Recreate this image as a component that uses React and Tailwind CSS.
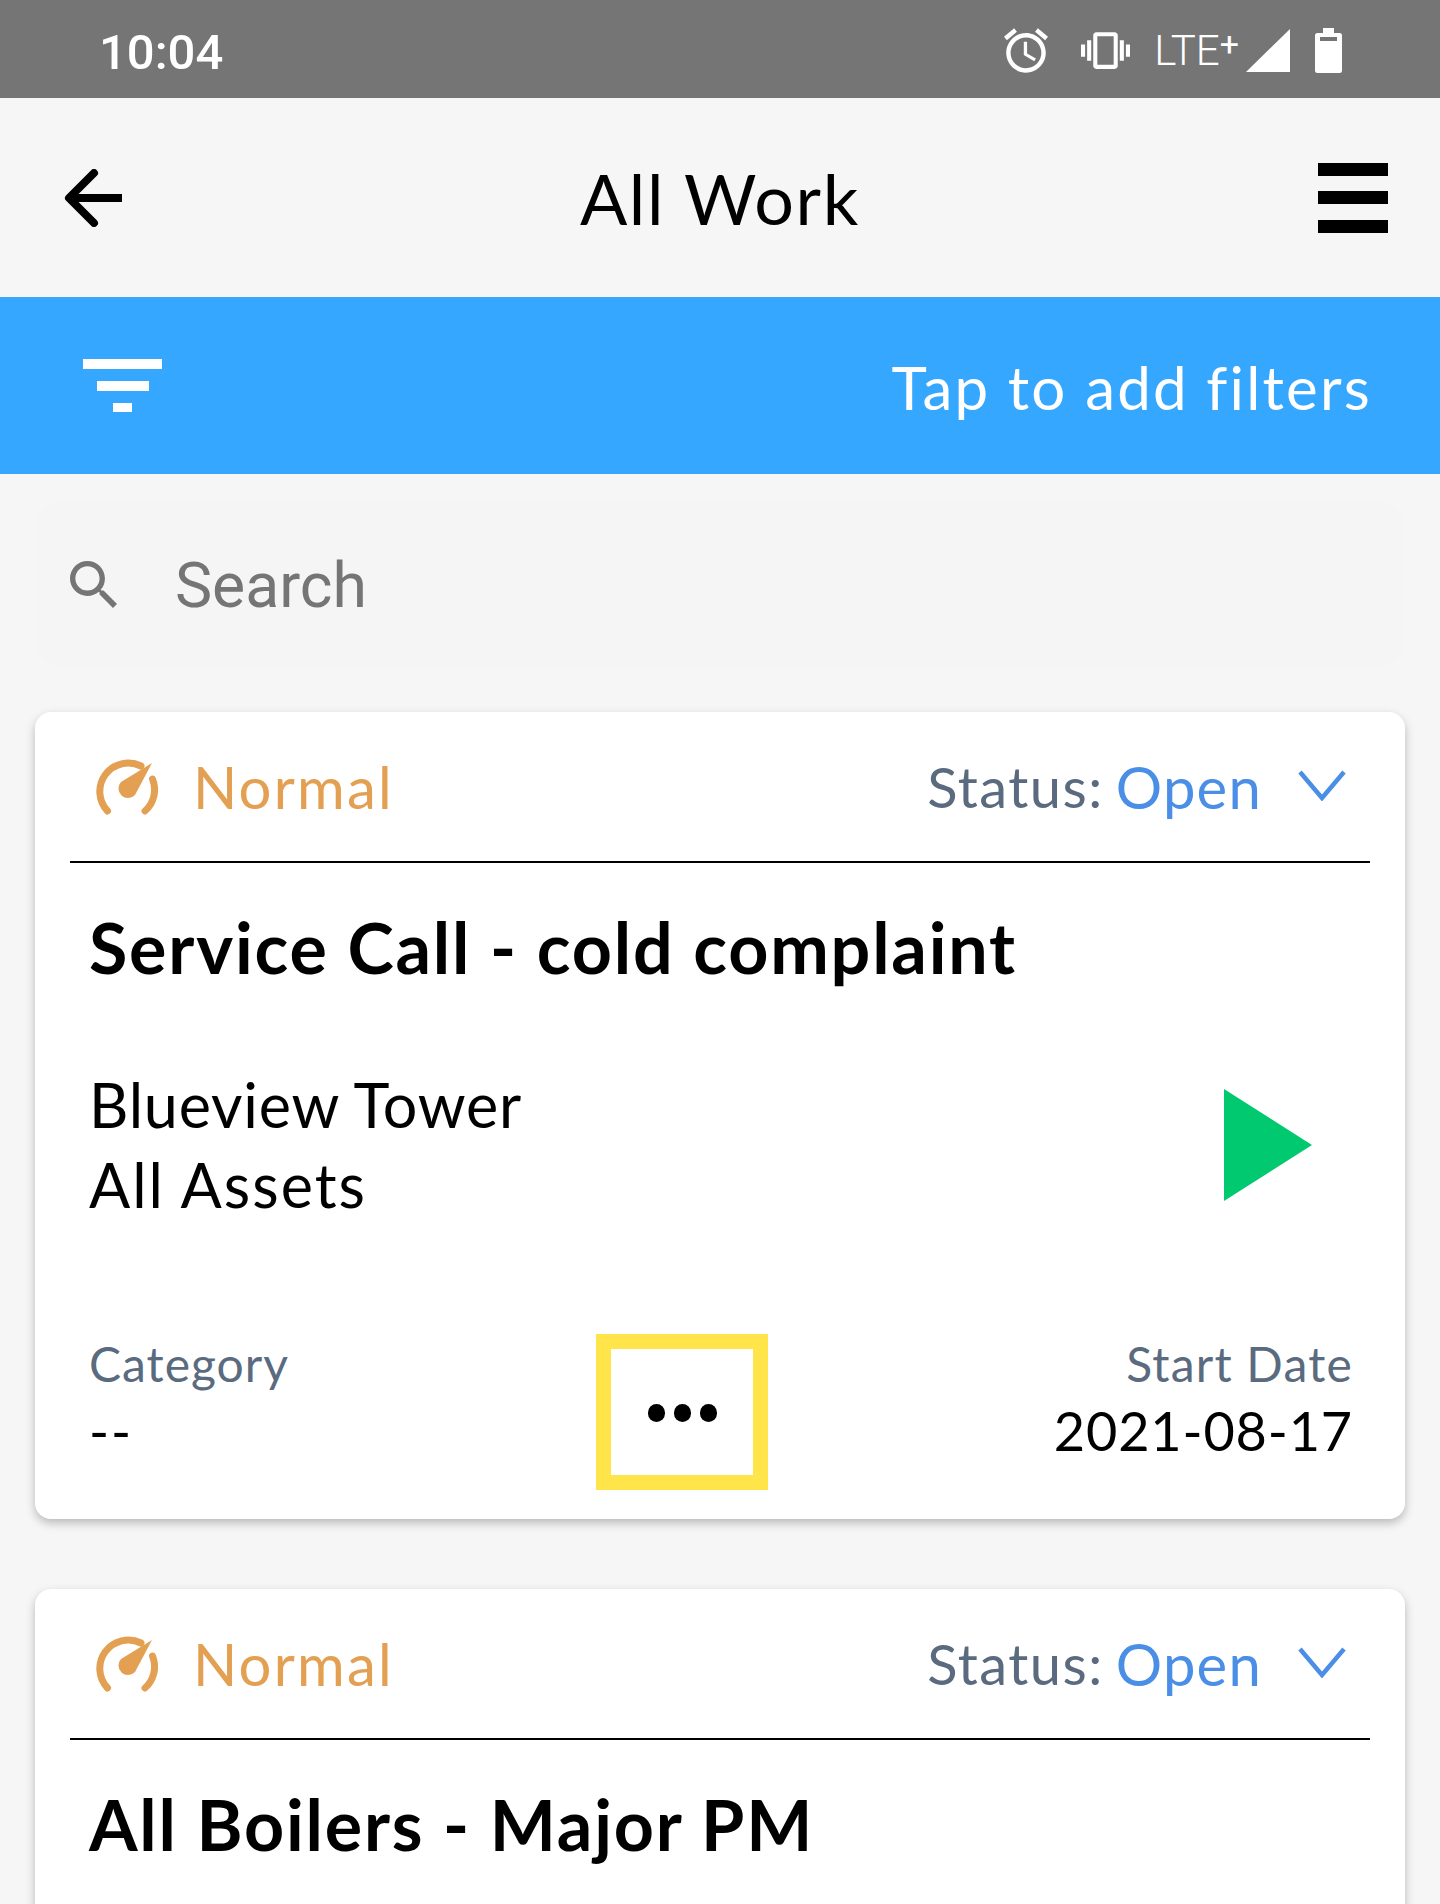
import React from "react";

const ui = "font-['Lato','Noto_Sans',sans-serif]";

const workOrders = [
  {
    id: 1,
    title: "Service Call - cold complaint",
    building: "Blueview Tower",
    asset: "All Assets",
    category: "--",
    startDate: "2021-08-17",
  },
  // only the top of this card fits on the screen
  { id: 2, title: "All Boilers - Major PM" },
];

// status bar icons, material paths
const AlarmIcon = () => (
  <svg viewBox="2 1.86 20 20.14" className="w-[44px] h-[45px]" fill="#fff">
    <path d="M22 5.72l-4.6-3.86-1.29 1.53 4.6 3.86L22 5.72zM7.88 3.39L6.6 1.86 2 5.71l1.29 1.53 4.59-3.85zM12.5 8H11v6l4.75 2.85.75-1.23-4-2.37V8zM12 4c-4.97 0-9 4.03-9 9s4.03 9 9 9 9-4.03 9-9-4.03-9-9-9zm0 16c-3.87 0-7-3.13-7-7s3.13-7 7-7 7 3.13 7 7-3.13 7-7 7z" />
  </svg>
);

const VibrateIcon = () => (
  <svg viewBox="0 3 24 18" className="w-[49px] h-[37px]" fill="#fff">
    <path d="M0 15h2V9H0v6zm3 2h2V7H3v10zm19-8v6h2V9h-2zm-3 8h2V7h-2v10zM16.5 3h-9C6.67 3 6 3.67 6 4.5v15c0 .83.67 1.5 1.5 1.5h9c.83 0 1.5-.67 1.5-1.5v-15c0-.83-.67-1.5-1.5-1.5zM16 19H8V5h8v14z" />
  </svg>
);

const SignalIcon = () => (
  <svg viewBox="0 0 44 43" className="w-[44px] h-[43px]" fill="#fff">
    <path d="M44 0v43H0z" />
  </svg>
);

const BatteryIcon = () => (
  <svg viewBox="0 0 27 45" className="w-[27px] h-[45px]" fill="#fff">
    <path
      fillRule="evenodd"
      d="M8 0h11v5h5.5A2.5 2.5 0 0 1 27 7.5v35a2.5 2.5 0 0 1-2.500 2.500h-22A2.500 2.500 0 0 1 0 42.500v-35A2.500 2.500 0 0 1 2.500 5H8zM5 9v4h17V9z"
    />
  </svg>
);

const BackIcon = () => (
  <svg viewBox="0 0 58 58" className="w-[58px] h-[58px]" fill="none" stroke="#000" strokeWidth="8">
    <path d="M58 29H6" />
    <path d="M30 4 5 29l25 25" strokeLinecap="round" strokeLinejoin="round" />
  </svg>
);

const MenuIcon = () => (
  <svg viewBox="0 0 70 70" className="w-[70px] h-[70px]" fill="#000">
    <rect y="0" width="70" height="13" />
    <rect y="28" width="70" height="13" />
    <rect y="57" width="70" height="13" />
  </svg>
);

const FilterIcon = () => (
  <svg viewBox="0 0 79 53" className="w-[79px] h-[53px]" fill="#fff">
    <rect x="0" y="0" width="79" height="10" />
    <rect x="14" y="22" width="52" height="10" />
    <rect x="30" y="44" width="19" height="9" />
  </svg>
);

const SearchIcon = () => (
  <svg viewBox="3 3 17.49 17.49" className="w-[47px] h-[47px]" fill="#757575">
    <path d="M15.5 14h-.79l-.28-.27C15.41 12.59 16 11.11 16 9.5 16 5.91 13.09 3 9.5 3S3 5.91 3 9.5 5.91 16 9.5 16c1.61 0 3.09-.59 4.23-1.57l.27.28v.79l5 4.99L20.49 19l-4.99-5zm-6 0C7.01 14 5 11.99 5 9.5S7.01 5 9.5 5 14 7.01 14 9.5 11.99 14 9.5 14z" />
  </svg>
);

const GaugeIcon = () => (
  <svg viewBox="0 0 64 57" className="w-[64px] h-[57px]">
    <path d="M13.500 53A28.500 28.500 0 0 1 47 8" fill="none" stroke="#e3a052" strokeWidth="7" strokeLinecap="round" />
    <path d="M58.500 21A28.500 28.500 0 0 1 51 53" fill="none" stroke="#e3a052" strokeWidth="7" strokeLinecap="round" />
    <path d="M58 5 27 24A9.500 9.500 0 1 0 41 37Z" fill="#e3a052" />
  </svg>
);

const ChevronIcon = () => (
  <svg viewBox="0 0 48 31" className="w-[48px] h-[31px]" fill="none" stroke="#4a8ee6" strokeWidth="4.500">
    <path d="M2 2 24 28 46 2" />
  </svg>
);

const PlayIcon = () => (
  <svg viewBox="0 0 88 112" className="w-[88px] h-[112px]" fill="#00c96f">
    <path d="M0 0 88 56 0 112Z" />
  </svg>
);

const WorkCard = ({ order }) => (
  <div className="bg-white rounded-[16px] shadow-[0_4px_10px_rgba(0,0,0,0.25)] px-[35px] mb-[70px] shrink-0">
    <div className="h-[151px] border-b-2 border-black flex items-center justify-between pl-[24px] pr-[24px]">
      <div className="flex items-center">
        <GaugeIcon />
        <span className="ml-[35px] text-[58px] tracking-[2.2px] text-[#e3a052]">Normal</span>
      </div>
      <div className="flex items-center">
        <span className="text-[56px] tracking-[1.5px] text-[#5a6b80]">Status: </span>
        <span className="ml-[12px] text-[58px] tracking-[1.2px] text-[#4a8ee6]">Open</span>
        <span className="ml-[36px] -mt-[2px]">
          <ChevronIcon />
        </span>
      </div>
    </div>

    <div className="pl-[19px] pr-[17px]">
      <h2 className="mt-[39px] text-[70px] leading-[90px] tracking-[1.8px] font-bold text-black">{order.title}</h2>

      {order.building ? (
        <>
          <div className="mt-[73px] flex items-center justify-between">
            <div className="text-[61px] leading-[80px] text-black">
              <p className="tracking-[0.8px]">{order.building}</p>
              <p className="tracking-[2px]">{order.asset}</p>
            </div>
            <div className="mr-[41px]">
              <PlayIcon />
            </div>
          </div>

          <div className="mt-[109px] pb-[29px] grid grid-cols-[507px_172px_1fr]">
            <div>
              <p className="text-[48px] leading-[60px] tracking-[1px] text-[#5a6b80]">Category</p>
              <p className="text-[54px] leading-[74px] tracking-[2px] text-black">{order.category}</p>
            </div>
            <div className="h-[156px] pt-[2px] border-[15px] border-[#ffe54a] flex items-center justify-center">
              <span className="w-[17px] h-[18px] bg-black rounded-full" />
              <span className="ml-[9px] w-[17px] h-[18px] bg-black rounded-full" />
              <span className="ml-[9px] w-[17px] h-[18px] bg-black rounded-full" />
            </div>
            <div className="text-right">
              <p className="text-[48px] leading-[60px] tracking-[1.2px] text-[#5a6b80]">Start Date</p>
              <p className="text-[54px] leading-[74px] tracking-[0.85px] text-black">{order.startDate}</p>
            </div>
          </div>
        </>
      ) : (
        <div className="h-[80px]" />
      )}
    </div>
  </div>
);

export default function App() {
  return (
    <div className={`w-[1440px] h-[1904px] overflow-hidden bg-[#f6f6f6] ${ui}`}>
      {/* Android status bar */}
      <div className="h-[98px] pt-[3px] bg-[#757575] flex items-center justify-between pl-[99px] pr-[98px] font-['Roboto',sans-serif] text-white">
        <span className="mt-[5px] text-[49px] font-medium">10:04</span>
        <div className="flex items-center">
          <AlarmIcon />
          <span className="ml-[33px]">
            <VibrateIcon />
          </span>
          <span className="ml-[24px] text-[42px] font-light leading-none flex items-start">
            LTE
            <span className="text-[34px] leading-none font-normal -mt-[3px]">+</span>
          </span>
          <span className="ml-[7px]">
            <SignalIcon />
          </span>
          <span className="ml-[25px]">
            <BatteryIcon />
          </span>
        </div>
      </div>

      <header className="h-[199px] bg-[#f6f6f6] grid grid-cols-[1fr_auto_1fr] items-center">
        <div className="pl-[64px]">
          <BackIcon />
        </div>
        <h1 className="pt-[2px] text-[70px] tracking-[1.7px] text-black">All Work</h1>
        <div className="pr-[52px] flex justify-end">
          <MenuIcon />
        </div>
      </header>

      <div className="h-[177px] bg-[#36a7ff] flex items-center justify-between pl-[83px] pr-[68px]">
        <FilterIcon />
        <span className="pt-[3px] text-[60px] tracking-[2.2px] text-white">Tap to add filters</span>
      </div>

      <div className="px-[35px]">
        <div className="mt-[26px] mb-[44px] h-[168px] rounded-[28px] bg-[#f5f5f5] flex items-center pl-[35px]">
          <SearchIcon />
          <span className="ml-[58px] pt-[3px] text-[62.5px] text-[#757575] font-['Roboto',sans-serif]">Search</span>
        </div>

        {workOrders.map((order) => (
          <WorkCard key={order.id} order={order} />
        ))}
      </div>
    </div>
  );
}
